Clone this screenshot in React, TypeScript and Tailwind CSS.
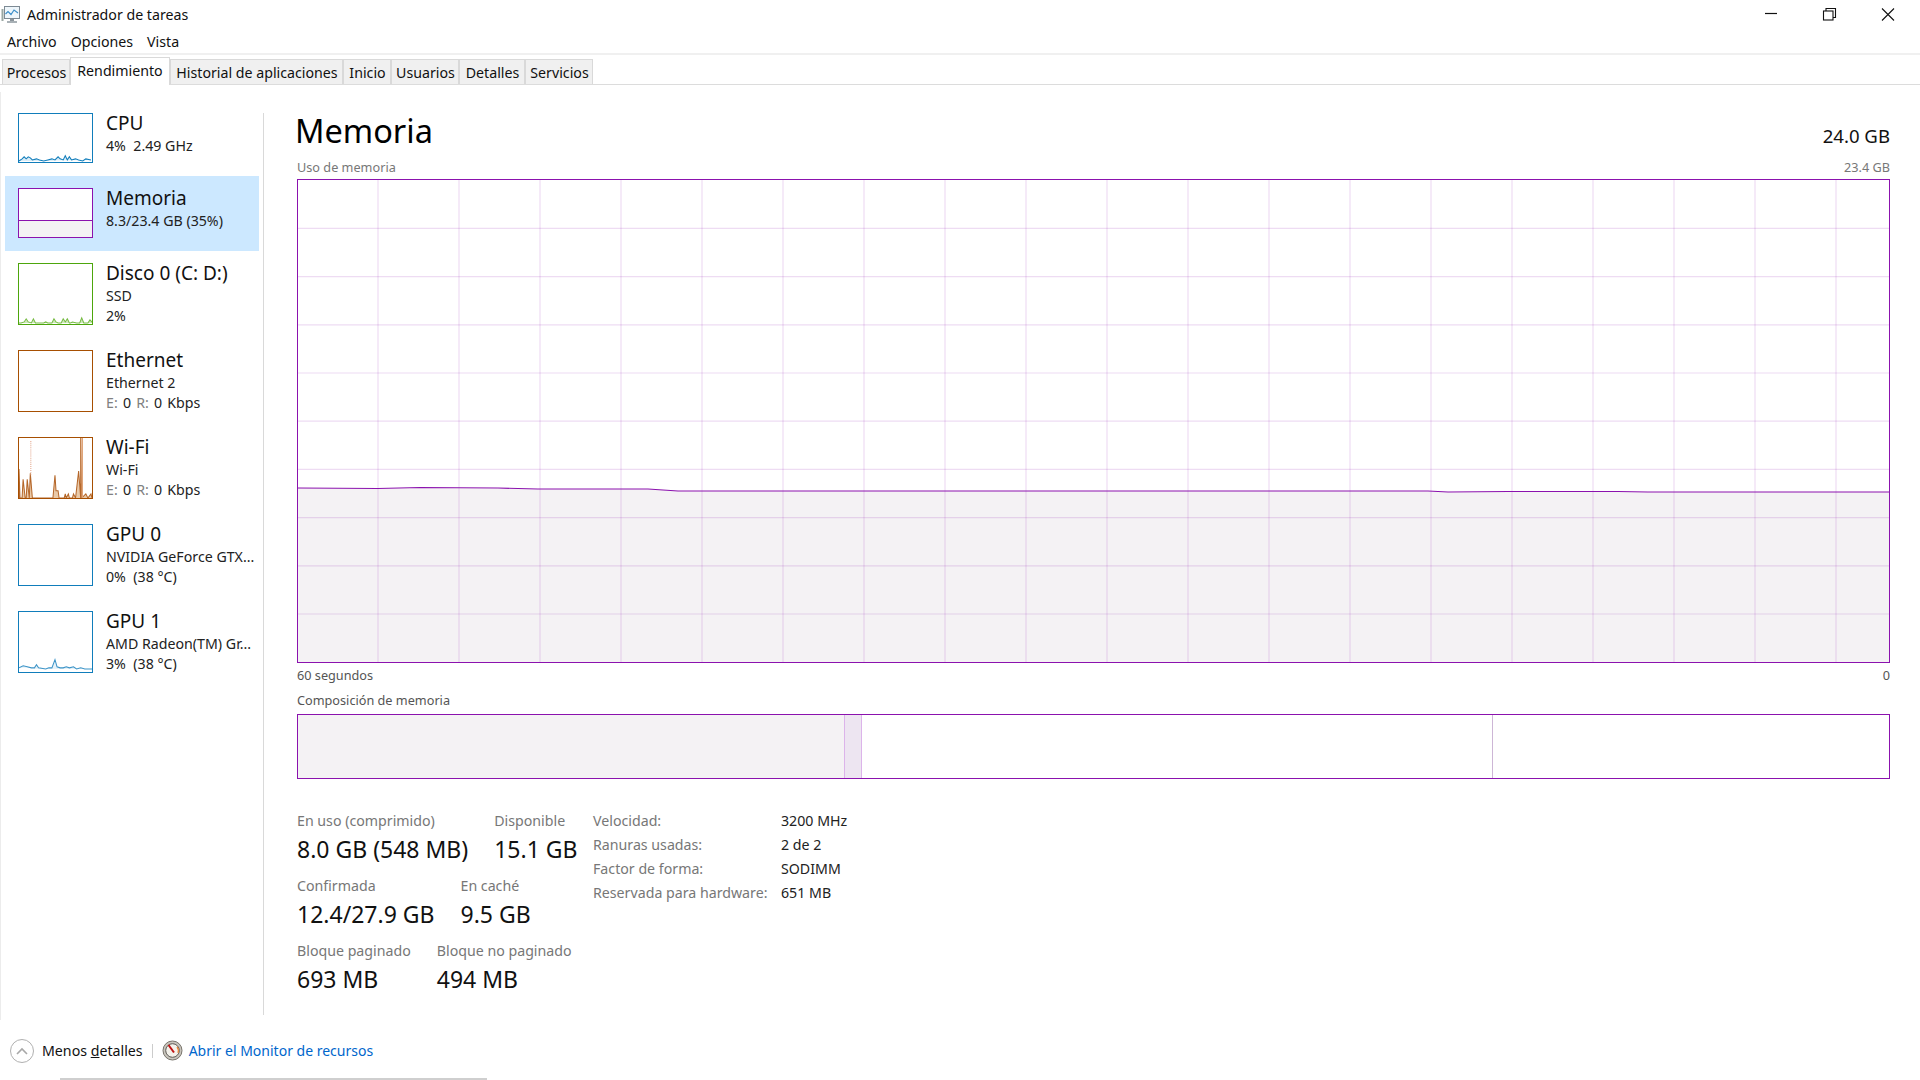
import type { ReactNode } from 'react';

const FONT = "font-['Noto_Sans',sans-serif]";

const tabs = [
  { label: 'Procesos', width: 'w-[68px]' },
  { label: 'Rendimiento', width: 'w-[100px]', active: true },
  { label: 'Historial de aplicaciones', width: 'w-[173px]' },
  { label: 'Inicio', width: 'w-[48px]' },
  { label: 'Usuarios', width: 'w-[68px]' },
  { label: 'Detalles', width: 'w-[66px]' },
  { label: 'Servicios', width: 'w-[68px]' },
];

const cpuLine = '0,45 3,43 5,41 7,43 9,41 11,42 13,44 17,43 20,44 24,45 28,44 32,43 35,44 38,41 40,43 43,44 45,40 47,44 49,41 51,44 55,43 58,44 62,45 65,43 70,44';
const diskLine = '0,57 2,57 5,56 7,53 9,56 12,57 14,53 16,57 24,57 26,56 28,57 32,57 34,53 36,56 38,57 41,57 43,53 45,56 47,53 49,57 50,57 52,56 56,57 59,57 61,52 63,57 67,57 69,54 72,57';
const wifiLine = '0,58 0,30 1,58 3,58 4,40 6,58 7,58 8,40 10,58 11,34 13,58 33,58 35,36 36,51 38,51 39,58 44,58 45,54 46,58 48,54 49,58 52,58 53,54 55,58 58,32 60,58 60,0 61,58 65,54 67,58 70,54 71,58';
const gpuLine = '0,54 4,52 8,53 12,54 15,54 17,51 19,54 26,55 29,54 32,54 35,46 37,53 40,54 43,54 46,53 49,54 53,53 56,55 60,54 64,55 71,55';

type Device = {
  name: string;
  lines: ReactNode[];
  color: string;
  short?: boolean;
  selected?: boolean;
  spark?: ReactNode;
};

const throughput = (
  <span className="[word-spacing:1.5px]">
    <span className="text-[#808080]">E:</span> 0 <span className="text-[#808080]">R:</span> 0 Kbps
  </span>
);

const devices: Device[] = [
  {
    name: 'CPU',
    lines: ['4%\u00a0 2.49 GHz'],
    color: 'border-[#117dbb]',
    short: true,
    spark: <polyline points={cpuLine} fill="#d9ecf7" stroke="#117dbb" strokeWidth="1" />,
  },
  {
    name: 'Memoria',
    lines: ['8.3/23.4 GB (35%)'],
    color: 'border-[#8b12ae]',
    short: true,
    selected: true,
    spark: (
      <>
        <rect x="0" y="30" width="71" height="16" fill="#f4f2f4" />
        <line x1="0" y1="30" x2="71" y2="30" stroke="#8b12ae" strokeWidth="1" shapeRendering="crispEdges" />
      </>
    ),
  },
  {
    name: 'Disco 0 (C: D:)',
    lines: ['SSD', '2%'],
    color: 'border-[#4da60c]',
    spark: <polyline points={diskLine} fill="#cfe8bd" stroke="#77bb44" strokeWidth="1" />,
  },
  {
    name: 'Ethernet',
    lines: ['Ethernet 2', throughput],
    color: 'border-[#a74f01]',
  },
  {
    name: 'Wi-Fi',
    lines: ['Wi-Fi', throughput],
    color: 'border-[#a74f01]',
    spark: (
      <>
        <polyline points={wifiLine} fill="#e9c9a8" stroke="#b5672a" strokeWidth="1" />
        <line x1="61.5" y1="0" x2="61.5" y2="58" stroke="#dfa57a" strokeWidth="1.5" />
        <line x1="11.5" y1="3" x2="11.5" y2="36" stroke="#e3a68c" strokeWidth="1" strokeDasharray="1 1" />
      </>
    ),
  },
  {
    name: 'GPU 0',
    lines: ['NVIDIA GeForce GTX...', '0%\u00a0 (38 °C)'],
    color: 'border-[#117dbb]',
  },
  {
    name: 'GPU 1',
    lines: ['AMD Radeon(TM) Gr...', '3%\u00a0 (38 °C)'],
    color: 'border-[#117dbb]',
    spark: <polyline points={gpuLine} fill="#e6f2f9" stroke="#3b93c7" strokeWidth="1" />,
  },
];

const stats = [
  [
    { label: 'En uso (comprimido)', value: '8.0 GB (548 MB)' },
    { label: 'Disponible', value: '15.1 GB' },
  ],
  [
    { label: 'Confirmada', value: '12.4/27.9 GB' },
    { label: 'En caché', value: '9.5 GB' },
  ],
  [
    { label: 'Bloque paginado', value: '693 MB' },
    { label: 'Bloque no paginado', value: '494 MB' },
  ],
];

const specs = [
  ['Velocidad:', '3200 MHz'],
  ['Ranuras usadas:', '2 de 2'],
  ['Factor de forma:', 'SODIMM'],
  ['Reservada para hardware:', '651 MB'],
];

function AppIcon() {
  return (
    <svg width="20" height="20" viewBox="0 0 20 20" className="shrink-0">
      <rect x="0.5" y="4" width="2" height="12" fill="#9aa7a3" />
      <rect x="3.5" y="1.5" width="15" height="12" fill="#eef6fb" stroke="#7d8a94" />
      <polyline points="4.5,9 7,6.5 10,9.5 13,5 17,8" fill="none" stroke="#3d8fc9" strokeWidth="1.2" />
      <rect x="9" y="14" width="4" height="2" fill="#8b949b" />
      <rect x="6" y="16" width="10" height="2" fill="#a9b1b6" />
    </svg>
  );
}

function WindowButtons() {
  return (
    <div className="flex items-start pr-[6px]">
      <svg width="58" height="28" viewBox="0 0 58 28">
        <line x1="6" y1="13.5" x2="18" y2="13.5" stroke="#111" strokeWidth="1.2" />
      </svg>
      <svg width="59" height="28" viewBox="0 0 59 28">
        <rect x="6.5" y="11" width="9.5" height="9" fill="#fff" stroke="#111" strokeWidth="1.1" />
        <path d="M9 11V8.5h9.5V17.5H16" fill="none" stroke="#111" strokeWidth="1.1" />
      </svg>
      <svg width="38" height="28" viewBox="0 0 38 28">
        <path d="M6 8.5l12 12M18 8.5l-12 12" fill="none" stroke="#111" strokeWidth="1.1" />
      </svg>
    </div>
  );
}

function DeviceRow({ device }: { device: Device }) {
  const height = device.short ? 'h-[50px]' : 'h-[62px]';
  return (
    <div className={`flex w-[254px] gap-[13px] pt-[12px] pb-[13px] pl-[13px] ${device.selected ? 'bg-[#cce8ff]' : ''}`}>
      <div className={`w-[75px] shrink-0 border bg-white ${height} ${device.color}`}>
        <svg
          width="73"
          height={device.short ? 48 : 60}
          viewBox={`0 0 71 ${device.short ? 46 : 58}`}
          preserveAspectRatio="none"
          className="block"
        >
          {device.spark}
        </svg>
      </div>
      <div className="-mt-[2px] -mb-px min-w-0">
        <div className="text-[19px] leading-[25px] text-[#111]">{device.name}</div>
        {device.lines.map((line, i) => (
          <div key={i} className="whitespace-nowrap text-[14.2px] leading-[20px] text-[#222]">
            {line}
          </div>
        ))}
      </div>
    </div>
  );
}

function UsageChart() {
  const verticals = Array.from({ length: 20 }, (_, i) => 80 + i * 81);
  const horizontals = Array.from({ length: 9 }, (_, i) => 48.4 + i * 48.2);
  const top = '0,308 80,308.5 122,307.5 200,308 240,309 350,309 380,311 1130,311 1150,312 1210,311.5 1320,311.5 1350,312 1591,312';
  return (
    <div className="h-[484px] w-[1593px] border border-[#8b12ae]">
      <svg width="1591" height="482" viewBox="0 0 1591 482" className="block">
        <polygon points={`${top} 1591,482 0,482`} fill="#f4f2f4" />
        {verticals.map((x) => (
          <line key={x} x1={x} y1="0" x2={x} y2="482" stroke="#8b12ae" strokeOpacity="0.15" strokeWidth="1.2" />
        ))}
        {horizontals.map((y) => (
          <line key={y} x1="0" y1={y} x2="1591" y2={y} stroke="#8b12ae" strokeOpacity="0.15" strokeWidth="1.2" />
        ))}
        <polyline points={top} fill="none" stroke="#8b12ae" strokeWidth="1.2" />
      </svg>
    </div>
  );
}

function CompositionBar() {
  return (
    <div className="flex h-[65px] w-[1593px] border border-[#8b12ae]">
      <div className="w-[546px] bg-[#f4f2f4]" />
      <div className="w-[18px] border-x border-x-[#dcb4ea] bg-[#ede5f1]" />
      <div className="w-[631px] border-r border-r-[#cdb6d6]" />
      <div className="flex-1" />
    </div>
  );
}

function ResourceMonitorIcon() {
  return (
    <svg width="21" height="21" viewBox="0 0 21 21" className="shrink-0">
      <circle cx="10.5" cy="10.5" r="9.5" fill="#c9c5bd" stroke="#77736b" strokeWidth="1" />
      <circle cx="10.5" cy="10.5" r="6.8" fill="#f4f1ea" stroke="#5c5a55" strokeWidth="1" />
      <path d="M15 7a6 6 0 0 1 1 6" fill="none" stroke="#e8873a" strokeWidth="1.2" />
      <line x1="6.5" y1="5" x2="12" y2="12.5" stroke="#c01414" strokeWidth="2" />
    </svg>
  );
}

export default function App() {
  return (
    <div className={`flex h-[1080px] w-[1920px] flex-col overflow-hidden bg-white text-[14.2px] text-[#111] ${FONT}`}>
      {/* title bar */}
      <div className="flex h-[28px] items-start justify-between">
        <div className="flex items-center gap-[6px] pt-[5px] pl-[1px]">
          <AppIcon />
          <span className="leading-[20px]">Administrador de tareas</span>
        </div>
        <WindowButtons />
      </div>

      {/* menu */}
      <div className="flex h-[25px] items-center gap-[14px] pt-[2px] pl-[7px] leading-[23px]">
        <span>Archivo</span>
        <span>Opciones</span>
        <span>Vista</span>
      </div>
      <div className="h-[2px] bg-[#f0f0f0]" />

      {/* tabs */}
      <div className="flex h-[30px] items-end border-b border-b-[#dcdcdc] pl-[2px]">
        {tabs.map((tab) =>
          tab.active ? (
            <div
              key={tab.label}
              className={`-mb-px flex h-[28px] items-start justify-center border border-b-0 border-[#d9d9d9] bg-white pt-[2px] ${tab.width}`}
            >
              {tab.label}
            </div>
          ) : (
            <div
              key={tab.label}
              className={`flex h-[25px] items-center justify-center border border-b-0 border-[#d9d9d9] bg-[#f0f0f0] pt-[2px] pl-[1px] ${tab.width}`}
            >
              {tab.label}
            </div>
          ),
        )}
      </div>

      {/* body */}
      <div className="mt-[7px] flex h-[928px] border-l border-l-[#ececec] pt-[9px]">
        <div className="ml-[4px] w-[254px]">
          {devices.map((device) => (
            <DeviceRow key={device.name} device={device} />
          ))}
        </div>
        <div className="mt-[12px] ml-[4px] h-[902px] w-px bg-[#d9d9d9]" />

        <div className="ml-[33px] w-[1593px]">
          <div className="flex h-[58px] items-start justify-between">
            <span className="mt-[6px] -ml-[2px] text-[32.5px] leading-[48px] text-black">Memoria</span>
            <span className="mt-[21px] text-[18.6px] leading-[28px] text-[#111]">24.0 GB</span>
          </div>
          <div className="flex h-[18px] items-center justify-between text-[12.7px] text-[#777]">
            <span>Uso de memoria</span>
            <span>23.4 GB</span>
          </div>
          <div className="h-[2px]" />
          <UsageChart />
          <div className="flex h-[25px] items-center justify-between pt-px text-[12.7px] text-[#555]">
            <span>60 segundos</span>
            <span>0</span>
          </div>
          <div className="flex h-[26px] items-center text-[12.7px] text-[#555]">Composición de memoria</div>
          <CompositionBar />

          <div className="mt-[30px] flex items-start">
            <div className="w-[296px]">
              {stats.map((row) => (
                <div key={row[0].label} className="mb-[5px] flex h-[60px] gap-[26px]">
                  {row.map((stat) => (
                    <div key={stat.label} className="whitespace-nowrap">
                      <div className="text-[14.2px] leading-[24px] text-[#777]">{stat.label}</div>
                      <div className="text-[23px] leading-[32px] text-[#111]">{stat.value}</div>
                    </div>
                  ))}
                </div>
              ))}
            </div>
            <div className="grid grid-cols-[188px_auto] justify-start text-[14.2px] leading-[24px]">
              {specs.map(([label, value]) => (
                <div key={label} className="contents">
                  <span className="whitespace-nowrap text-[#777]">{label}</span>
                  <span className="text-[#222]">{value}</span>
                </div>
              ))}
            </div>
          </div>
        </div>
      </div>

      {/* footer */}
      <div className="flex h-[58px] items-center pt-[3px] pl-[10px]">
        <div className="flex h-[24px] w-[24px] items-center justify-center rounded-full border border-[#b0b0b0]">
          <svg width="12" height="8" viewBox="0 0 12 8">
            <path d="M1 7l5-5 5 5" fill="none" stroke="#a8a8a8" strokeWidth="1.6" />
          </svg>
        </div>
        <span className="ml-[8px]">
          Menos <span className="underline">d</span>etalles
        </span>
        <div className="mx-[9px] h-[14px] w-px bg-[#cccccc]" />
        <ResourceMonitorIcon />
        <span className="ml-[6px] text-[14px] text-[#0066cc]">Abrir el Monitor de recursos</span>
      </div>
      <div className="ml-[60px] h-[2px] w-[427px] bg-[#cfcfcf]" />
    </div>
  );
}
